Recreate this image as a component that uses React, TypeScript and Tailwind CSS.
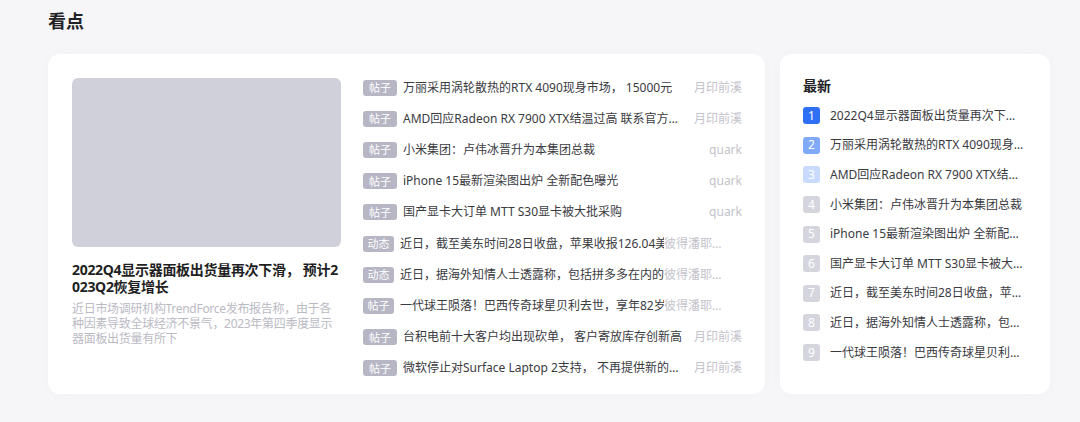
import React from "react";

type Post = {
  tag: string;
  title: string;
  author: string;
  tight?: boolean;
};

const posts: Post[] = [
  { tag: "帖子", title: "万丽采用涡轮散热的RTX 4090现身市场， 15000元", author: "月印前溪" },
  { tag: "帖子", title: "AMD回应Radeon RX 7900 XTX结温过高 联系官方售后处理", author: "月印前溪" },
  { tag: "帖子", title: "小米集团：卢伟冰晋升为本集团总裁", author: "quark" },
  { tag: "帖子", title: "iPhone 15最新渲染图出炉 全新配色曝光", author: "quark" },
  { tag: "帖子", title: "国产显卡大订单 MTT S30显卡被大批采购", author: "quark" },
  { tag: "动态", title: "近日，截至美东时间28日收盘，苹果收报126.04美元", author: "彼得潘耶夫斯基", tight: true },
  { tag: "动态", title: "近日，据海外知情人士透露称，包括拼多多在内的多家", author: "彼得潘耶夫斯基", tight: true },
  { tag: "帖子", title: "一代球王陨落！巴西传奇球星贝利去世，享年82岁", author: "彼得潘耶夫斯基", tight: true },
  { tag: "帖子", title: "台积电前十大客户均出现砍单， 客户寄放库存创新高", author: "月印前溪" },
  { tag: "帖子", title: "微软停止对Surface Laptop 2支持， 不再提供新的固件更新", author: "月印前溪" },
];

const latest = [
  "2022Q4显示器面板出货量再次下滑， 预计2023Q2恢复增长",
  "万丽采用涡轮散热的RTX 4090现身市场， 15000元",
  "AMD回应Radeon RX 7900 XTX结温过高 联系官方售后处理",
  "小米集团：卢伟冰晋升为本集团总裁",
  "iPhone 15最新渲染图出炉 全新配色曝光",
  "国产显卡大订单 MTT S30显卡被大批采购",
  "近日，截至美东时间28日收盘，苹果收报126.04美元",
  "近日，据海外知情人士透露称，包括拼多多在内的多家",
  "一代球王陨落！巴西传奇球星贝利去世，享年82岁",
];

// summary text, broken into the three lines the card shows
const summaryLines = [
  "近日市场调研机构TrendForce发布报告称，由于各",
  "种因素导致全球经济不景气，2023年第四季度显示",
  "器面板出货量有所下",
];

const rankColor = (i: number) => {
  if (i === 0) return "bg-[#2f6ff6]";
  if (i === 1) return "bg-[#80a9f8]";
  if (i === 2) return "bg-[#c8dafd]";
  return "bg-[#d5d5de]";
};

function PostRow({ post }: { post: Post }) {
  if (post.tight) {
    return (
      <div className="flex h-[31.2px] items-center">
        <span className="flex h-4 w-[31px] shrink-0 items-center justify-center rounded-[3px] bg-[#b6b6c4] text-[11px] leading-none text-white">
          {post.tag}
        </span>
        <span className="ml-[6px] w-[264px] shrink-0 overflow-hidden whitespace-nowrap text-[12px] text-[#3a3a3f]">
          {post.title}
        </span>
        <span className="w-[69px] truncate text-[12px] text-[#c3c3cb]">{post.author}</span>
      </div>
    );
  }
  return (
    <div className="flex h-[31.2px] items-center">
      <span className="flex h-4 w-[34px] shrink-0 items-center justify-center rounded-[3px] bg-[#b6b6c4] text-[11px] leading-none text-white">
        {post.tag}
      </span>
      <span className="ml-[6px] max-w-[281px] truncate text-[12px] text-[#3a3a3f]">{post.title}</span>
      <span className="ml-auto shrink-0 pl-2 text-[12px] text-[#c3c3cb]">{post.author}</span>
    </div>
  );
}

export default function App() {
  return (
    <div
      className="h-[422px] w-[1080px] overflow-hidden bg-[#f6f6f8] pl-12"
      style={{ fontFamily: '"Noto Sans", "Noto Sans CJK SC", sans-serif' }}
    >
      <h2 className="flex h-[54px] items-start pt-[8px] text-[18px] font-bold leading-[26px] text-[#222226]">看点</h2>

      <div className="flex gap-[15px]">
        {/* featured story + post list */}
        <div className="flex h-[340px] w-[717px] rounded-xl bg-white pl-6 pr-[23px] shadow-[0_0_12px_rgba(0,0,0,0.025)]">
          <div className="w-[270px] shrink-0 pt-6">
            <div className="h-[169px] w-[269px] rounded-md bg-[#d0d0da]" />
            <h3 className="mt-[14px] break-all text-[14px] font-bold leading-[17px] tracking-[-0.3px] text-[#1f1f23]">
              2022Q4显示器面板出货量再次下滑， 预计2023Q2恢复增长
            </h3>
            <p className="mt-[6px] text-[12px] leading-[15px] tracking-[-0.3px] text-[#babac4]">
              {summaryLines.map((line, i) => (
                <span key={i} className="block whitespace-nowrap">
                  {line}
                </span>
              ))}
            </p>
          </div>
          <div className="ml-[21px] flex-1 pt-[18px]">
            {posts.map((p, i) => (
              <PostRow key={i} post={p} />
            ))}
          </div>
        </div>

        {/* latest ranking */}
        <div className="h-[340px] w-[270px] rounded-xl bg-white px-[23px] pt-[22px] shadow-[0_0_12px_rgba(0,0,0,0.025)]">
          <div className="mb-[5px] text-[14px] font-bold leading-5 text-[#222226]">最新</div>
          {latest.map((t, i) => (
            <div key={i} className="flex h-[29.6px] items-center">
              <span
                className={`flex h-[17px] w-[17px] shrink-0 items-center justify-center rounded-[3px] text-[12px] leading-none text-white ${rankColor(i)}`}
              >
                {i + 1}
              </span>
              <span className="ml-[10px] min-w-0 flex-1 truncate text-[12px] text-[#3a3a3f]">{t}</span>
            </div>
          ))}
        </div>
      </div>
    </div>
  );
}
